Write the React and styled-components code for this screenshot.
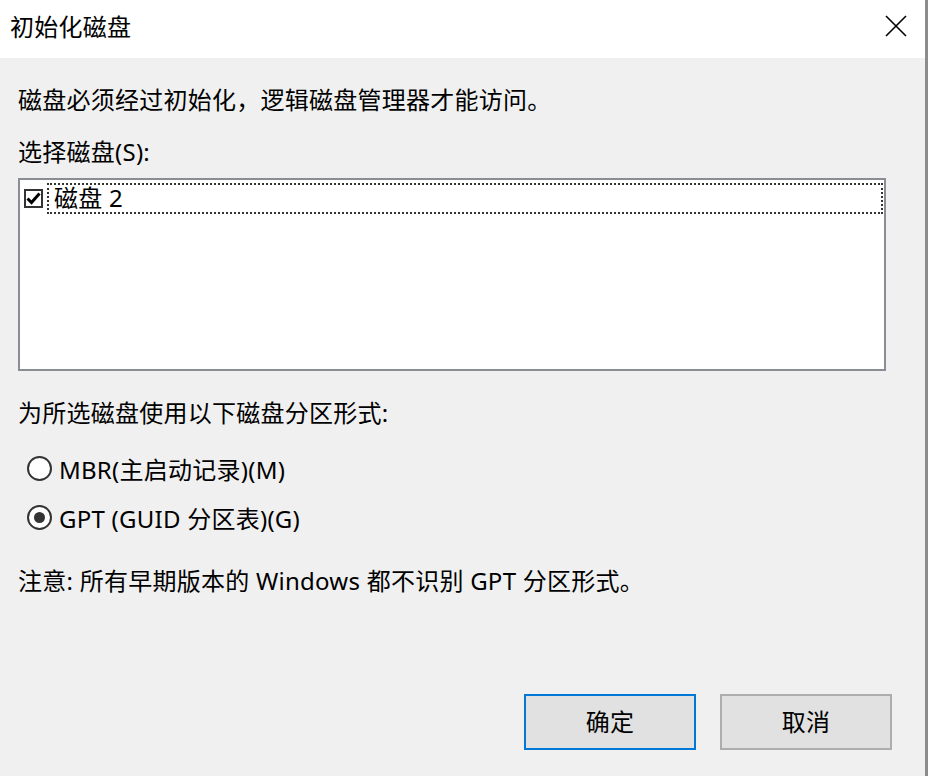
import React from "react";
import styled, { createGlobalStyle } from "styled-components";

const Global = createGlobalStyle`
  html, body { margin: 0; padding: 0; background: #f0f0f0; }
  body { font-family: "Noto Sans", "Noto Sans CJK SC", sans-serif; }
`;

const Window = styled.div`
  width: 928px;
  height: 776px;
  box-sizing: border-box;
  border-right: 3px solid #8c8c8c;
  display: flex;
  flex-direction: column;
  background: #f0f0f0;
  color: #000;
  font-size: 24px;
  letter-spacing: 0.25px;
`;

const TitleBar = styled.div`
  height: 58px;
  background: #fff;
  display: flex;
  align-items: center;
  justify-content: space-between;
  padding: 0 17px 0 10px;
  flex-shrink: 0;
`;

const Title = styled.div`
  font-size: 24px;
  line-height: 30px;
  margin-top: -4px;
`;

const CloseBtn = styled.div`
  width: 24px;
  height: 24px;
  display: flex;
  align-items: center;
  justify-content: center;
  margin-top: -6px;
`;

const Body = styled.div`
  flex: 1;
  display: flex;
  flex-direction: column;
  padding: 0 0 0 18px;
`;

const Text = styled.div`
  line-height: 32px;
  margin-top: ${(p) => p.$mt || 0}px;
  white-space: nowrap;
`;

const ListBox = styled.div`
  margin-top: ${(p) => p.$mt || 0}px;
  width: 868px;
  height: 193px;
  box-sizing: border-box;
  border: 2px solid #8a8d93;
  background: #fff;
  padding: 2px 1px 0 4px;
`;

const ListItem = styled.div`
  display: flex;
  align-items: center;
  height: 32px;
`;

const CheckBox = styled.div`
  width: 19px;
  height: 19px;
  box-sizing: border-box;
  border: 2px solid #333;
  background: #fff;
  display: flex;
  align-items: center;
  justify-content: center;
  flex-shrink: 0;
  margin-right: 4px;
`;

const ItemLabel = styled.div`
  flex: 1;
  height: 31px;
  box-sizing: border-box;
  border: 2px dotted #333;
  display: flex;
  align-items: center;
  padding-left: 5px;
  line-height: 28px;
`;

const RadioRow = styled.div`
  display: flex;
  align-items: center;
  margin-top: ${(p) => p.$mt || 0}px;
  padding-left: 9px;
  height: 32px;
`;

const RadioCircle = styled.div`
  width: 25px;
  height: 25px;
  box-sizing: border-box;
  border-radius: 50%;
  border: 2px solid #333;
  background: #fff;
  display: flex;
  align-items: center;
  justify-content: center;
  margin-right: 7px;
  flex-shrink: 0;
  &::after {
    content: "";
    width: 11px;
    height: 11px;
    border-radius: 50%;
    background: #333;
    display: ${(p) => (p.$checked ? "block" : "none")};
  }
`;

const Spacer = styled.div`
  flex: 1;
`;

const Buttons = styled.div`
  display: flex;
  justify-content: flex-end;
  gap: 24px;
  padding-right: 33px;
  margin-bottom: 26px;
`;

const Button = styled.div`
  width: 172px;
  height: 56px;
  box-sizing: border-box;
  background: #e1e1e1;
  border: 2px solid ${(p) => (p.$primary ? "#0078d7" : "#adadad")};
  display: flex;
  align-items: center;
  justify-content: center;
  line-height: 30px;
`;

export default function App() {
  return (
    <>
      <Global />
      <Window>
        <TitleBar>
          <Title>初始化磁盘</Title>
          <CloseBtn>
            <svg width="22" height="22" viewBox="0 0 22 22">
              <path d="M1 1 L21 21 M21 1 L1 21" stroke="#000" strokeWidth="1.6" />
            </svg>
          </CloseBtn>
        </TitleBar>
        <Body>
          <Text $mt={26}>磁盘必须经过初始化，逻辑磁盘管理器才能访问。</Text>
          <Text $mt={20}>选择磁盘(S):</Text>
          <ListBox $mt={10}>
            <ListItem>
              <CheckBox>
                <svg width="15" height="13" viewBox="0 0 15 13">
                  <path d="M1.5 6.5 L5.5 10.5 L13.5 1.5" stroke="#000" strokeWidth="3" fill="none" />
                </svg>
              </CheckBox>
              <ItemLabel>磁盘 2</ItemLabel>
            </ListItem>
          </ListBox>
          <Text $mt={26}>为所选磁盘使用以下磁盘分区形式:</Text>
          <RadioRow $mt={23}>
            <RadioCircle />
            <span>MBR(主启动记录)(M)</span>
          </RadioRow>
          <RadioRow $mt={17}>
            <RadioCircle $checked />
            <span>GPT (GUID 分区表)(G)</span>
          </RadioRow>
          <Text $mt={32}>注意: 所有早期版本的 Windows 都不识别 GPT 分区形式。</Text>
          <Spacer />
          <Buttons>
            <Button $primary>确定</Button>
            <Button>取消</Button>
          </Buttons>
        </Body>
      </Window>
    </>
  );
}
